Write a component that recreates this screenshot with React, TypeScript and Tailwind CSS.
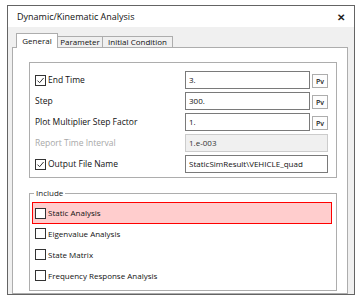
import React from "react";

const font = { fontFamily: '"Open Sans", "Noto Sans", sans-serif' };

const Check = ({ checked }: { checked?: boolean }) => (
  <span className="w-[11px] h-[11px] border border-[#333333] bg-white flex items-center justify-center shrink-0">
    {checked && (
      <svg width="9" height="9" viewBox="0 0 9 9">
        <path d="M1.5 4.6 L3.6 6.7 L7.6 2" fill="none" stroke="#333" strokeWidth="1" />
      </svg>
    )}
  </span>
);

const PvButton = () => (
  <button className="w-[16px] h-[14px] mt-[3px] border border-[#adadad] bg-[#fdfdfd] text-[7px] font-semibold leading-none text-[#222] flex items-center justify-center">
    Pv
  </button>
);

const Field = ({ value, disabled }: { value: string; disabled?: boolean }) => (
  <div
    className={
      "h-[18px] flex-1 border flex items-center px-[3px] text-[8px] font-medium " +
      (disabled ? "border-[#cccccc] bg-[#f0f0f0] text-[#333]" : "border-[#7a7a7a] bg-white text-[#111]")
    }
  >
    {value}
  </div>
);

const Row = ({
  label,
  checkbox,
  dim,
  children,
}: {
  label: string;
  checkbox?: boolean;
  dim?: boolean;
  children: React.ReactNode;
}) => (
  <div className="h-[18px] flex items-center">
    <div className="w-[150px] flex items-center gap-[2px]">
      {checkbox && <Check checked />}
      <span className={"text-[8.5px] font-medium " + (dim ? "text-[#a8a8a8]" : "text-[#111]")}>{label}</span>
    </div>
    <div className="flex-1 flex items-start gap-[2px]">{children}</div>
  </div>
);

const IncludeRow = ({ label, active }: { label: string; active?: boolean }) => (
  <div
    className={
      "flex items-center gap-[2px] " +
      (active
        ? "h-[22px] -mb-[1px] border border-[#ff0000] bg-[#ffcdcd] ml-[2px] mr-[4px] pl-[2px]"
        : "h-[21px] pl-[5px]")
    }
  >
    <Check />
    <span className="text-[8px] font-medium text-[#111]">{label}</span>
  </div>
);

export default function App() {
  return (
    <div className="w-[358px] h-[298px] bg-white overflow-hidden" style={font}>
      <div className="ml-[7px] mt-[5px] w-[348px] h-[290px] border border-[#646464] bg-[#f0f0f0] flex flex-col">
        <div className="h-[21px] bg-white flex items-center justify-between pl-[9px] pr-[9px] shrink-0">
          <span className="text-[9px] text-[#111]">Dynamic/Kinematic Analysis</span>
          <span className="text-[10px] font-bold text-[#222] leading-none">✕</span>
        </div>
        <div className="h-[20px] flex items-end pl-[8px] shrink-0 relative z-10">
          <div className="h-[15px] w-[42px] border border-b-0 border-[#adadad] bg-white text-[8px] font-medium text-[#111] flex items-center justify-center -mb-[1px]">
            General
          </div>
          <div className="h-[11px] w-[45px] border border-l-0 border-b-0 border-[#adadad] bg-[#f0f0f0] text-[8px] font-medium text-[#111] flex items-center justify-center">
            Parameter
          </div>
          <div className="h-[11px] w-[70px] border border-l-0 border-b-0 border-[#adadad] bg-[#f0f0f0] text-[8px] font-medium text-[#111] flex items-center justify-center">
            Initial Condition
          </div>
        </div>
        <div className="flex-1 ml-[4px] mr-[6px] border border-[#adadad] bg-white pl-[16px] pr-[10px] pt-[14px]">
          <div className="h-[116px] border border-[#adadad] pl-[5px] pr-[8px] pt-[8px] flex flex-col gap-[3px]">
            <Row label="End Time" checkbox>
              <Field value="3." />
              <PvButton />
            </Row>
            <Row label="Step">
              <Field value="300." />
              <PvButton />
            </Row>
            <Row label="Plot Multiplier Step Factor">
              <Field value="1." />
              <PvButton />
            </Row>
            <Row label="Report Time Interval" dim>
              <Field value="1.e-003" disabled />
            </Row>
            <Row label="Output File Name" checkbox>
              <Field value="StaticSimResult\VEHICLE_quad" />
            </Row>
          </div>
          <div className="mt-[15px] h-[98px] border border-[#adadad] relative pt-[8px]">
            <span className="absolute -top-[7px] left-[4px] bg-white px-[2px] text-[8px] font-medium text-[#222]">Include</span>
            <div className="flex flex-col">
              <IncludeRow label="Static Analysis" active />
              <IncludeRow label="Eigenvalue Analysis" />
              <IncludeRow label="State Matrix" />
              <IncludeRow label="Frequency Response Analysis" />
            </div>
          </div>
        </div>
      </div>
    </div>
  );
}
